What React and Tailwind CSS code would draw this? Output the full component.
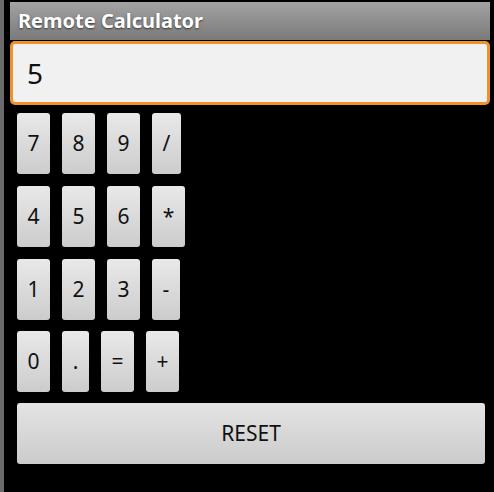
import React from 'react';

const rows = [
  [['7', 'w-[33px]'], ['8', 'w-[33px]'], ['9', 'w-[33px]'], ['/', 'w-[29px]']],
  [['4', 'w-[33px]'], ['5', 'w-[33px]'], ['6', 'w-[33px]'], ['*', 'w-[33px]']],
  [['1', 'w-[33px]'], ['2', 'w-[33px]'], ['3', 'w-[33px]'], ['-', 'w-[28px]']],
  [['0', 'w-[33px]'], ['.', 'w-[27px]'], ['=', 'w-[33px]'], ['+', 'w-[33px]']],
];

function Key({ label, width }) {
  return (
    <button
      className={`${width} h-[61px] rounded-[3px] bg-gradient-to-b from-[#e9e9e9] to-[#cccccc] text-[21px] text-[#111] flex items-center justify-center`}
    >
      {label}
    </button>
  );
}

export default function App() {
  return (
    <div className="w-[494px] h-[492px] bg-black flex overflow-hidden" style={{ fontFamily: '"Noto Sans", "Open Sans", sans-serif' }}>
      {/* emulator edge */}
      <div className="w-[4px] h-full bg-[#6b6b6b]" />

      <div className="flex-1 pt-[2px] pl-[6px] pr-[4px] bg-black">
        <div className="h-[38px] bg-gradient-to-b from-[#a3a3a3] to-[#7a7a7a] flex items-center pl-[8px]">
          <span className="text-white font-bold text-[20px] [text-shadow:0_1px_2px_rgba(0,0,0,0.6)]">
            Remote Calculator
          </span>
        </div>

        <div className="mt-[1px] h-[64px] rounded-[5px] border-[3px] border-[#f0922c] bg-[#f1f1f1] flex items-center pl-[14px]">
          <span className="text-[28px] text-[#111]">5</span>
        </div>

        <div className="pl-[7px] pt-[8px] flex flex-col gap-[12px]">
          {rows.map((row, i) => (
            <div key={i} className={`flex gap-[12px] ${i === 3 ? 'mt-[-1px]' : ''}`}>
              {row.map(([label, w]) => (
                <Key key={label} label={label} width={w} />
              ))}
            </div>
          ))}
          <button className="mt-[-1px] w-[468px] h-[61px] rounded-[3px] bg-gradient-to-b from-[#e4e4e4] to-[#cbcbcb] text-[21px] text-[#111] flex items-center justify-center">
            RESET
          </button>
        </div>
      </div>
    </div>
  );
}
